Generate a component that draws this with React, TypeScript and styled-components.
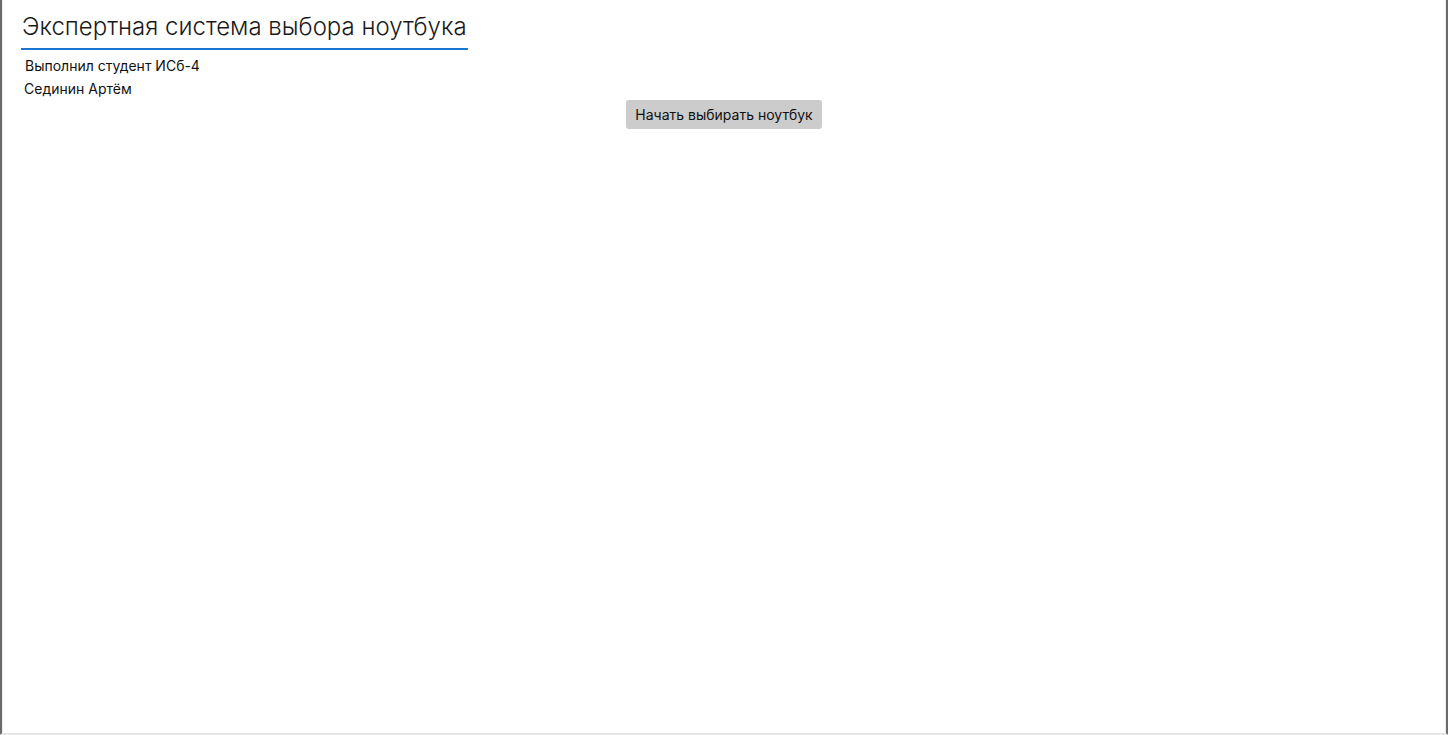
import React from "react";
import styled, { createGlobalStyle } from "styled-components";

const Global = createGlobalStyle`
  html, body { margin: 0; padding: 0; background: #ffffff; }
  body { font-family: Inter, Roboto, "Liberation Sans", sans-serif; }
`;

const Frame = styled.div`
  box-sizing: border-box;
  width: 1448px;
  height: 735px;
  border-left: 2px solid #6b6b6b;
  border-right: 2px solid #6b6b6b;
  border-bottom: 2px solid #e6e6e6;
  display: flex;
  flex-direction: column;
  background: #fff;
`;

const Inner = styled.div`
  flex: 1;
  border-left: 1px solid #ececec;
  border-right: 1px solid #ececec;
  padding: 11px 0 0 18px;
  display: flex;
  flex-direction: column;
`;

const Title = styled.h1`
  align-self: flex-start;
  margin: 0;
  padding: 0 1px 5px 1px;
  font-family: Inter, Roboto, "Liberation Sans", sans-serif;
  font-weight: 300;
  font-size: 24px;
  line-height: 32px;
  color: #1a1a1a;
  border-bottom: 2px solid #1976d2;
`;

const Info = styled.div`
  display: flex;
  flex-direction: column;
  margin-top: 4px;
  padding-left: 3px;
`;

const InfoLine = styled.div<{ $shift?: number }>`
  font-size: 14px;
  line-height: 23px;
  color: #111;
  margin-left: ${(p) => p.$shift ?? 0}px;
`;

const Center = styled.div`
  display: flex;
  justify-content: center;
  margin-left: -18px;
  margin-top: 0px;
`;

const Button = styled.button`
  width: 196px;
  height: 29px;
  border: none;
  border-radius: 3px;
  background: #cccccc;
  color: #111;
  font-family: Inter, Roboto, "Liberation Sans", sans-serif;
  font-size: 14px;
  padding: 0;
  cursor: pointer;
`;

export default function App() {
  return (
    <>
      <Global />
      <Frame>
        <Inner>
          <Title>Экспертная система выбора ноутбука</Title>
          <Info>
            <InfoLine $shift={1}>Выполнил студент ИСб-4</InfoLine>
            <InfoLine>Сединин Артём</InfoLine>
          </Info>
          <Center>
            <Button>Начать выбирать ноутбук</Button>
          </Center>
        </Inner>
      </Frame>
    </>
  );
}
